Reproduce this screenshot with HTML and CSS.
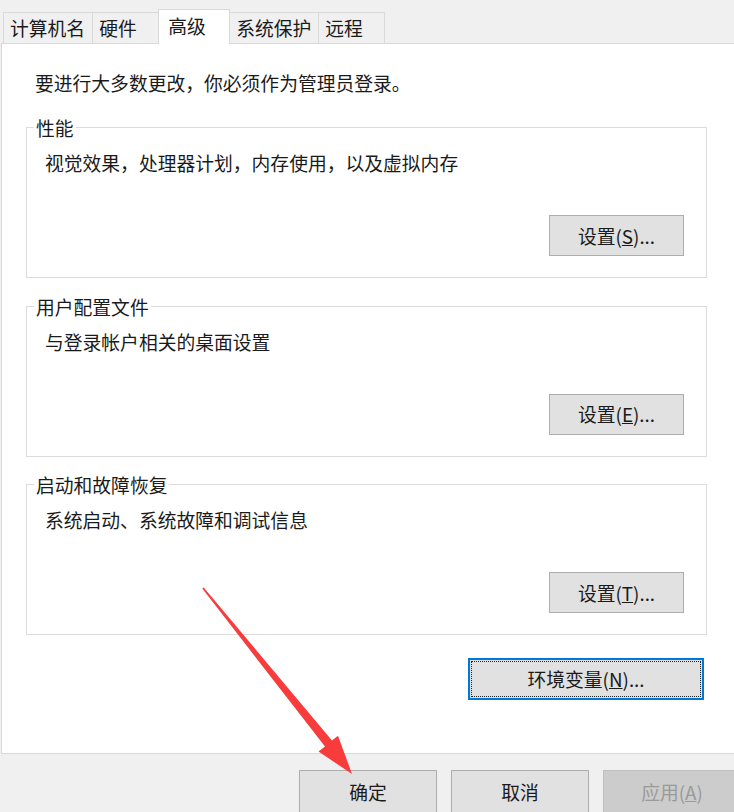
FILE: index.html
```html
<!DOCTYPE html>
<html lang="zh-CN">
<head>
<meta charset="utf-8">
<title>系统属性 - 高级</title>
<link rel="stylesheet" href="styles.css">
</head>
<body>
<div class="window">
  <div class="tabs">
    <div class="tab">计算机名</div>
    <div class="tab">硬件</div>
    <div class="tab tab-active">高级</div>
    <div class="tab">系统保护</div>
    <div class="tab">远程</div>
  </div>
  <div class="panel">
    <p class="intro">要进行大多数更改，你必须作为管理员登录。</p>

    <fieldset class="group">
      <legend class="group-title">性能</legend>
      <p class="group-text">视觉效果，处理器计划，内存使用，以及虚拟内存</p>
      <div class="group-actions"><button class="btn btn-settings">设置(<u>S</u>)...</button></div>
    </fieldset>

    <fieldset class="group">
      <legend class="group-title">用户配置文件</legend>
      <p class="group-text">与登录帐户相关的桌面设置</p>
      <div class="group-actions"><button class="btn btn-settings">设置(<u>E</u>)...</button></div>
    </fieldset>

    <fieldset class="group">
      <legend class="group-title">启动和故障恢复</legend>
      <p class="group-text">系统启动、系统故障和调试信息</p>
      <div class="group-actions"><button class="btn btn-settings">设置(<u>T</u>)...</button></div>
    </fieldset>

    <div class="env-row">
      <button class="btn btn-env">环境变量(<u>N</u>)...</button>
    </div>
  </div>
  <div class="footer">
    <button class="btn btn-footer">确定</button>
    <button class="btn btn-footer">取消</button>
    <button class="btn btn-footer btn-disabled">应用(<u>A</u>)</button>
  </div>

  <svg class="arrow" width="734" height="812" viewBox="0 0 734 812" aria-hidden="true">
    <polygon points="202.3,588.6 203.7,587.4 332.0,740.5 338.0,735.8 352,774 318.5,751.5 325.0,746.5" fill="#f83b3b"/>
  </svg>
</div>
</body>
</html>
```

FILE: styles.css
```css
* {
  box-sizing: border-box;
}

html, body {
  margin: 0;
  padding: 0;
  background: #f0f0f0;
}

body {
  font-family: "Noto Sans CJK SC", "Noto Sans", sans-serif;
  font-size: 18.8px;
  color: #1a1a1a;
  text-spacing-trim: space-all;
}

.window {
  position: relative;
  width: 734px;
  height: 812px;
  overflow: hidden;
  background: #f0f0f0;
}

/* Tabs */
.tabs {
  display: flex;
  align-items: flex-end;
  padding: 9px 0 0 3px;
  height: 44px;
  margin-bottom: -1px;
}

.tab {
  height: 31px;
  margin-bottom: 1px;
  min-width: 67px;
  padding: 0 7px 0 6px;
  border: 1px solid #d9d9d9;
  border-bottom: none;
  background: #f0f0f0;
  line-height: 29px;
  white-space: nowrap;
}

.tab + .tab {
  margin-left: -1px;
}

.tab-active {
  position: relative;
  z-index: 1;
  height: 35px;
  margin-bottom: 0;
  min-width: 72px;
  padding-left: 9px;
  background: #ffffff;
  line-height: 31px;
}

/* Panel */
.panel {
  margin-left: 1px;
  margin-right: -20px;
  height: 711px;
  border: 1px solid #d9d9d9;
  border-right: none;
  background: #ffffff;
  padding: 0 0 0 24px;
}

.intro {
  margin: 29px 0 24px 9px;
  line-height: 20px;
}

.group {
  width: 681px;
  margin: 0;
  padding: 15px 0 21px 17px;
  border: 1px solid #dcdcdc;
  min-inline-size: 0;
}

.group + .group {
  margin-top: 17.5px;
}

.group-title {
  margin-left: -10px;
  padding: 0 2px;
  line-height: 21px;
}

.group-text {
  margin: 0 0 42px 1px;
  line-height: 20px;
}

.group-actions {
  display: flex;
  justify-content: flex-end;
  padding-right: 22px;
}

/* Buttons */
.btn {
  font-family: inherit;
  font-size: 18.8px;
  color: #1a1a1a;
  background: #e1e1e1;
  border: 1px solid #adadad;
  border-radius: 0;
  padding: 0;
  margin: 0;
  line-height: 20px;
}

.btn-settings {
  width: 135px;
  height: 41px;
}

.env-row {
  display: flex;
  justify-content: flex-start;
  padding-left: 442px;
  margin-top: 23px;
}

.btn-env {
  width: 236px;
  height: 42px;
  border: 2px solid #0078d7;
  outline: 1px dotted #222;
  outline-offset: -4px;
}

/* Footer */
.footer {
  display: flex;
  gap: 14px;
  padding: 16px 0 0 299px;
}

.btn-footer {
  flex: none;
  width: 138px;
  height: 44px;
}

.btn-disabled {
  background: #cccccc;
  border-color: #bfbfbf;
  color: #9a9a9a;
}

/* Annotation arrow overlay */
.arrow {
  position: absolute;
  left: 0;
  top: 0;
  pointer-events: none;
}
```
